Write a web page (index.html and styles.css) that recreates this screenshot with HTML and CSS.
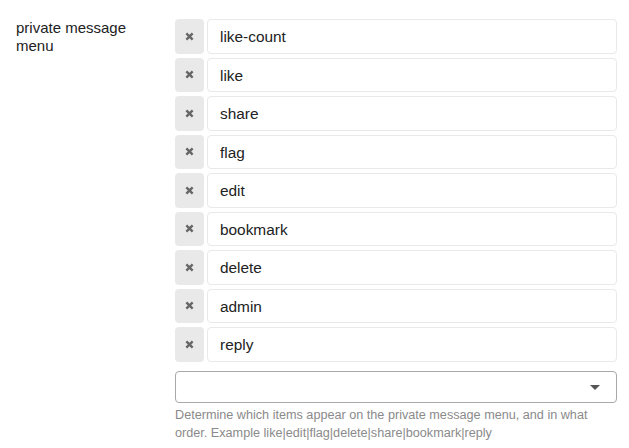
FILE: index.html
```html
<!DOCTYPE html>
<html>
<head>
<meta charset="utf-8">
<link rel="stylesheet" href="styles.css">
</head>
<body>
<div class="setting">
  <div class="label">private message menu</div>
  <div class="controls">
    <div class="list">
      <div class="row"><button class="remove"><svg viewBox="0 0 10 10" width="9" height="9"><path d="M1.5 1.5 L8.5 8.5 M8.5 1.5 L1.5 8.5" stroke="#666" stroke-width="2.6"/></svg></button><div class="value">like-count</div></div>
      <div class="row"><button class="remove"><svg viewBox="0 0 10 10" width="9" height="9"><path d="M1.5 1.5 L8.5 8.5 M8.5 1.5 L1.5 8.5" stroke="#666" stroke-width="2.6"/></svg></button><div class="value">like</div></div>
      <div class="row"><button class="remove"><svg viewBox="0 0 10 10" width="9" height="9"><path d="M1.5 1.5 L8.5 8.5 M8.5 1.5 L1.5 8.5" stroke="#666" stroke-width="2.6"/></svg></button><div class="value">share</div></div>
      <div class="row"><button class="remove"><svg viewBox="0 0 10 10" width="9" height="9"><path d="M1.5 1.5 L8.5 8.5 M8.5 1.5 L1.5 8.5" stroke="#666" stroke-width="2.6"/></svg></button><div class="value">flag</div></div>
      <div class="row"><button class="remove"><svg viewBox="0 0 10 10" width="9" height="9"><path d="M1.5 1.5 L8.5 8.5 M8.5 1.5 L1.5 8.5" stroke="#666" stroke-width="2.6"/></svg></button><div class="value">edit</div></div>
      <div class="row"><button class="remove"><svg viewBox="0 0 10 10" width="9" height="9"><path d="M1.5 1.5 L8.5 8.5 M8.5 1.5 L1.5 8.5" stroke="#666" stroke-width="2.6"/></svg></button><div class="value">bookmark</div></div>
      <div class="row"><button class="remove"><svg viewBox="0 0 10 10" width="9" height="9"><path d="M1.5 1.5 L8.5 8.5 M8.5 1.5 L1.5 8.5" stroke="#666" stroke-width="2.6"/></svg></button><div class="value">delete</div></div>
      <div class="row"><button class="remove"><svg viewBox="0 0 10 10" width="9" height="9"><path d="M1.5 1.5 L8.5 8.5 M8.5 1.5 L1.5 8.5" stroke="#666" stroke-width="2.6"/></svg></button><div class="value">admin</div></div>
      <div class="row"><button class="remove"><svg viewBox="0 0 10 10" width="9" height="9"><path d="M1.5 1.5 L8.5 8.5 M8.5 1.5 L1.5 8.5" stroke="#666" stroke-width="2.6"/></svg></button><div class="value">reply</div></div>
    </div>
    <div class="select"><span class="caret"></span></div>
    <div class="help">Determine which items appear on the private message menu, and in what order. Example like|edit|flag|delete|share|bookmark|reply</div>
  </div>
</div>
</body>
</html>
```
FILE: styles.css
```css
html, body {
  margin: 0;
  padding: 0;
  background: #fff;
}
body {
  font-family: "Liberation Sans", Arial, sans-serif;
  color: #222;
}
.setting {
  display: flex;
  padding: 19px 12px 0 16px;
}
.label {
  width: 130px;
  flex: none;
  font-size: 15px;
  line-height: 18px;
  margin-right: 29px;
}
.controls {
  width: 442px;
  flex: none;
}
.list {
  display: flex;
  flex-direction: column;
  gap: 4px;
}
.row {
  display: flex;
  gap: 3px;
  height: 34.5px;
}
.remove {
  width: 29px;
  height: 34.5px;
  flex: none;
  border: none;
  border-radius: 4px;
  background: #e9e9e9;
  display: flex;
  align-items: center;
  justify-content: center;
  padding: 0;
}
.value {
  flex: 1;
  box-sizing: border-box;
  height: 34.5px;
  border: 1px solid #e9e9e9;
  border-radius: 4px;
  padding: 0 12px;
  font-size: 15.4px;
  line-height: 33px;
  color: #222;
}
.select {
  margin-top: 9.5px;
  box-sizing: border-box;
  height: 32px;
  border: 1px solid #a8a8a8;
  border-radius: 4px;
  display: flex;
  align-items: center;
  justify-content: flex-end;
  padding-right: 16px;
}
.caret {
  width: 0;
  height: 0;
  border-left: 5px solid transparent;
  border-right: 5px solid transparent;
  border-top: 5px solid #555;
}
.help {
  margin-top: 3px;
  font-size: 12.65px;
  line-height: 18px;
  color: #8a8a8a;
}
```
